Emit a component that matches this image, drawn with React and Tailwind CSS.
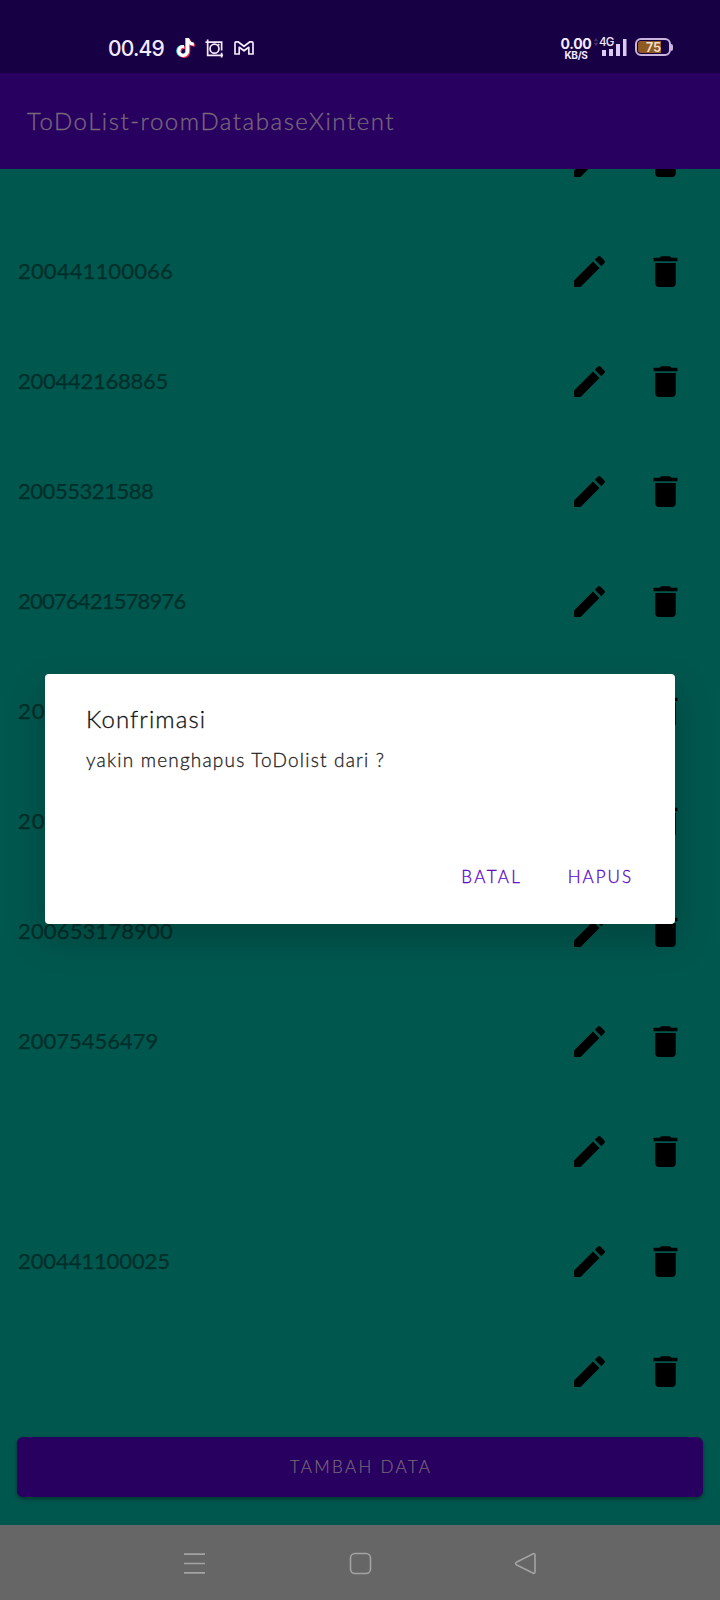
import React from "react";
import { FaTiktok } from "react-icons/fa";
import { MdEdit, MdDelete } from "react-icons/md";

const rows = [
  { text: "200441100026", cls: "tracking-[-0.2px] pb-[10px]" },
  { text: "200441100066", cls: "tracking-[0.15px]" },
  { text: "200442168865", cls: "tracking-[-0.25px]" },
  { text: "20055321588", cls: "tracking-[-0.45px]" },
  { text: "20076421578976", cls: "tracking-[-0.8px]" },
  { text: "200", cls: "tracking-[1px]" },
  { text: "200", cls: "tracking-[1px]" },
  { text: "200653178900", cls: "tracking-[0.15px]" },
  { text: "20075456479", cls: "tracking-[0px]" },
  { text: "", cls: "" },
  { text: "200441100025", cls: "tracking-[-0.1px]" },
  { text: "", cls: "" },
];

function StatusBar() {
  return (
    <div className="flex h-[73px] shrink-0 items-start bg-[#170043] pl-[108px] pr-[47px] pt-[37px] font-['Inter',sans-serif] text-[#f3eafd]">
      <span className="w-[67.5px] text-[21px] leading-[23px] font-medium tracking-[-0.8px]">00.49</span>
      <span className="relative mt-px block size-[19px]">
        <FaTiktok className="absolute top-0 -left-px size-[19px] text-[#32dce8]" />
        <FaTiktok className="absolute top-px left-px size-[19px] text-[#f0345c]" />
        <FaTiktok className="absolute top-0 left-0 size-[19px] text-white" />
      </span>
      <svg className="mt-[2px] ml-[10px] h-[19px] w-[19px]" viewBox="0 0 20 20" fill="none" stroke="currentColor" strokeWidth="1.8">
        <path d="M0.5 3.2H17.5V12M17.5 14.5V19.5M2.8 0.5V17.2H19" />
        <circle cx="10" cy="10.2" r="4.7" />
        <path d="M13.7 6.8l1.3-1.3" />
      </svg>
      <svg className="mt-[4px] ml-[10px] h-[14px] w-[20px]" viewBox="0 0 20 14" fill="none" stroke="currentColor" strokeWidth="1.7" strokeLinejoin="round">
        <path d="M1 13V2Q1 .8 2.4.8H4L10 5.3 16 .8h1.6Q19 .8 19 2V13H14.8V6.3L10 9.8 5.2 6.3V13Z" />
      </svg>
      <div className="ml-auto flex w-[30px] flex-col items-center font-bold">
        <span className="text-[14px] leading-[13px] tracking-[-0.3px]">0.00</span>
        <span className="text-[10px] leading-[11px] tracking-[-0.3px]">KB/S</span>
      </div>
      <svg className="mt-[1px] ml-[2px] h-[8px] w-[6px] opacity-20" viewBox="0 0 6 10" fill="currentColor">
        <path d="M0 4l3-4 3 4zM0 6l3 4 3-4z" />
      </svg>
      <div className="relative mr-px ml-[2px] h-[20px] w-[26px]">
        <span className="absolute -top-px left-[-2px] text-[11.5px] leading-[13px] font-medium tracking-[-0.8px]">4G</span>
        <svg className="h-[20px] w-[26px]" viewBox="0 0 26 20" fill="#dccbf0">
          <path d="M1 13h4v6H1zM8 12h4v7H8zM15 7h4v12h-4zM22 2h3.5v17H22z" />
        </svg>
      </div>
      <div className="ml-[7px] flex items-center pt-[1px]">
        <div className="flex h-[18px] w-[36px] items-center rounded-[6px] border-2 border-[#c9b4dd] p-px">
          <div className="h-full w-[23px] rounded-l-[3px] bg-[#8f5b22]">
            <span className="block w-[31px] text-center text-[13px] leading-[12px] font-semibold text-[#f6dfc8]">75</span>
          </div>
        </div>
        <div className="h-[7px] w-[2px] rounded-r bg-[#c9b4dd]" />
      </div>
    </div>
  );
}

function Row({ text, cls }) {
  return (
    <div className="flex h-[110px] shrink-0 items-center pl-[18px] pr-[34.5px]">
      <span className={"flex-1 text-[22px] leading-[30px] text-[#002e2a] [-webkit-text-stroke:0.25px] " + cls}>{text}</span>
      <MdEdit className="size-[41px] text-black" />
      <MdDelete className="ml-[34.5px] size-[41px] text-black" />
    </div>
  );
}

function Dialog() {
  return (
    <div className="absolute top-[674px] left-[45px] flex h-[250px] w-[630px] flex-col rounded-[4px] bg-white pr-[42px] pl-[41px] shadow-[0_16px_34px_2px_rgba(0,0,0,0.18)]">
      <h2 className="mt-[29px] text-[24px] leading-[32px] font-light tracking-[1.1px] text-[#111] [-webkit-text-stroke:0.3px]">Konfrimasi</h2>
      <p className="mt-[11px] text-[19px] leading-[28px] font-light tracking-[1.2px] text-[#222] [-webkit-text-stroke:0.3px]">yakin menghapus ToDolist dari ?</p>
      <div className="mt-[90px] flex justify-end gap-[45.5px] text-[17px] leading-[26px] font-light text-[#5a00c8] [-webkit-text-stroke:0.3px]">
        <span className="tracking-[2.4px]">BATAL</span>
        <span className="tracking-[2px]">HAPUS</span>
      </div>
    </div>
  );
}

export default function App() {
  return (
    <div className="relative flex h-[1600px] w-[720px] flex-col overflow-hidden bg-[#00574e] font-['Lato',sans-serif]">
      <StatusBar />
      <header className="flex h-[95.5px] shrink-0 items-center bg-[#28005f] pl-[27px]">
        <h1 className="text-[24px] leading-[30px] font-light tracking-[1.53px] text-[#77697a] [-webkit-text-stroke:0.3px]">ToDoList-roomDatabaseXintent</h1>
      </header>
      <main className="flex h-[1268.5px] shrink-0 flex-col overflow-hidden">
        <div className="-mt-[62.5px] flex flex-col">
          {rows.map((row, i) => (
            <Row key={i} {...row} />
          ))}
        </div>
      </main>
      <div className="h-[88px] shrink-0 px-[17px]">
        <div className="flex h-[60px] items-center justify-center rounded-[6px] bg-[#28005f] pl-[2px] text-[17px] font-light tracking-[2.35px] text-[#77697a] shadow-[0_2px_4px_rgba(0,0,0,0.4)] [-webkit-text-stroke:0.2px]">
          TAMBAH DATA
        </div>
      </div>
      <nav className="flex flex-1 items-center justify-between bg-[#666] pr-[183px] pl-[183px] pt-px text-[#a3a3a3]">
        <svg className="size-[23px]" viewBox="0 0 23 23" fill="none" stroke="currentColor" strokeWidth="1.7">
          <path d="M1 2.2H22M1 11.5H22M1 20.8H22" />
        </svg>
        <svg className="size-[23px]" viewBox="0 0 23 23" fill="none" stroke="currentColor" strokeWidth="1.6">
          <rect x="1.5" y="1.5" width="20" height="20" rx="4.5" />
        </svg>
        <svg className="size-[23px]" viewBox="0 0 23 23" fill="none" stroke="currentColor" strokeWidth="1.6" strokeLinejoin="round">
          <path d="M19.3 1.8L2.3 10.3Q.8 11.5 2.3 12.7L19.3 21.2Q21 21.8 21 20V3Q21 1.2 19.3 1.8Z" />
        </svg>
      </nav>
      <Dialog />
    </div>
  );
}
